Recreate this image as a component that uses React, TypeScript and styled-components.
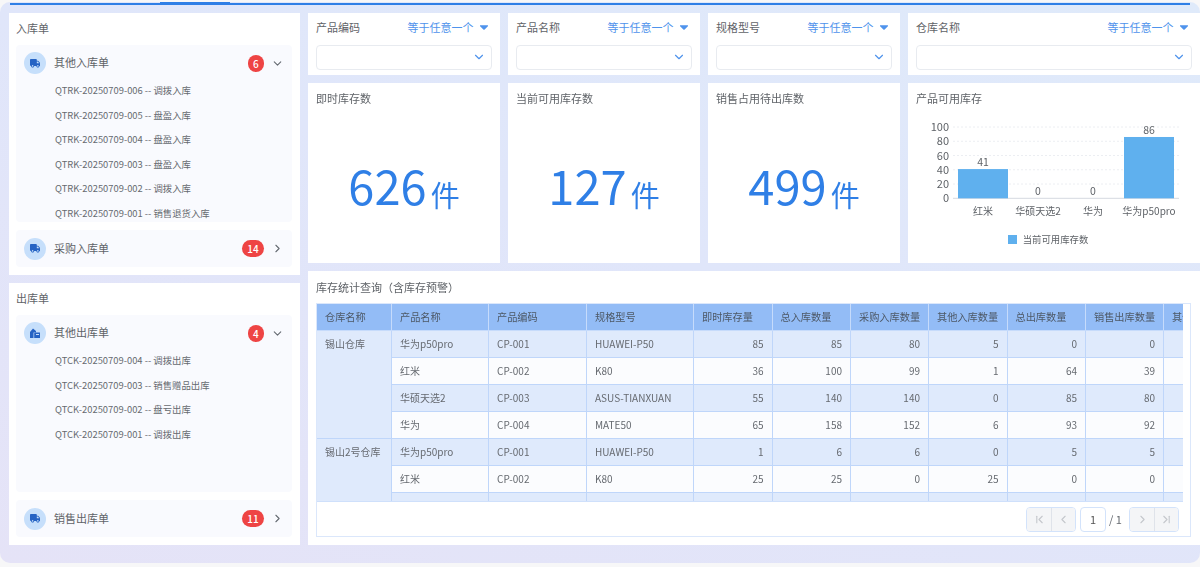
import React from "react";
import styled, { createGlobalStyle } from "styled-components";
import { FaTruck, FaCaretDown } from "react-icons/fa";
import { FiChevronDown, FiChevronRight, FiChevronLeft } from "react-icons/fi";
import { LuChevronFirst, LuChevronLast } from "react-icons/lu";

const Global = createGlobalStyle`
  html, body { margin: 0; padding: 0; background: #f7f7f8; overflow: hidden; }
  * { box-sizing: border-box; }
  body { font-family: "Noto Sans CJK SC", "Noto Sans", sans-serif; color: #5c6066; }
`;
const Page = styled.div`width:1200px;height:567px;overflow:hidden;padding-top:2px;filter:blur(0.3px);`;
const Shell = styled.div`
  height:561px;border-radius:10px;overflow:hidden;display:flex;flex-direction:column;
  background:linear-gradient(200deg,#dfeafa 0%,#e0e6fa 45%,#e5e3f7 100%);
`;
const TabLine = styled.div`height:3px;margin:0 10px;border-bottom:2px solid #2f7fe6;display:flex;padding-left:150px;flex:none;`;
const ActiveTab = styled.div`width:70px;height:3px;background:#2f7fe6;`;
const Main = styled.div`flex:1;min-height:0;display:grid;grid-template-columns:291px 892px;gap:8px;padding:8px 0 18px 9px;`;
const LeftCol = styled.div`display:grid;grid-template-rows:262px 262px;gap:8px;`;
const Panel = styled.section`background:#fff;padding:0 8px 8px 7px;display:flex;flex-direction:column;`;
const PanelTitle = styled.div`height:32px;line-height:30px;font-size:11px;color:#5f6368;flex:none;`;
const Group = styled.div<{ $open?: boolean }>`
  background:#f9fafe;border-radius:4px;overflow:hidden;
  ${p => (p.$open ? "flex:1;min-height:0;margin-bottom:8px;" : "flex:none;height:37px;")}
`;
const GroupHead = styled.div<{ $open?: boolean }>`
  display:flex;align-items:center;padding:0 5px 0 8px;
  height:${p => (p.$open ? "36px" : "37px")};
`;
const IconDot = styled.span`width:22px;height:22px;border-radius:50%;background:#c6dffb;color:#2563c4;display:flex;align-items:center;justify-content:center;flex:none;font-size:10.5px;`;
const GroupName = styled.span`margin-left:8px;font-size:11px;color:#5f6368;flex:1;padding-bottom:2px;`;
const Badge = styled.span<{ $wide?: boolean }>`
  height:17px;min-width:${p => (p.$wide ? "22px" : "16.5px")};border-radius:9px;background:#ee4444;color:#fff;
  font-size:10px;font-weight:500;line-height:17px;text-align:center;margin-right:1px;
`;
const Chevron = styled.span`width:19px;margin-left:3px;color:#666b72;display:flex;justify-content:center;font-size:13px;`;
const SubList = styled.ul`list-style:none;margin:0;padding:0 0 0 39px;`;
const SubItem = styled.li`height:24.6px;line-height:24.6px;font-size:9.4px;color:#666a70;white-space:nowrap;&:first-child{margin-top:-3px;}`;

const RightGrid = styled.div`display:grid;grid-template-columns:192px 192px 192px 292px;grid-template-rows:62px 180px 274px;gap:8px;`;
const FilterCard = styled.div`background:#fff;padding:0 8px;display:flex;flex-direction:column;`;
const FilterHead = styled.div`height:31.5px;padding:0 1.5px 3px 0;display:flex;align-items:center;justify-content:space-between;font-size:11px;`;
const FilterLabel = styled.span`color:#5f6368;`;
const FilterOp = styled.span`color:#4f93ec;display:flex;align-items:center;gap:3px;font-size:11px;`;
const SelectBox = styled.div`height:25px;border:1px solid #e8ebf0;border-radius:4px;display:flex;align-items:center;justify-content:flex-end;padding-right:5px;color:#4f93ec;font-size:14px;`;
const StatCard = styled.div`background:#fff;padding:0 8px;display:flex;flex-direction:column;`;
const ChartCard = styled(StatCard)`padding:0;`;
const CardTitle = styled.div`height:32px;line-height:31px;font-size:11px;color:#5f6368;flex:none;`;
const ChartTitle = styled(CardTitle)`padding-left:8px;`;
const StatBody = styled.div`flex:1;display:flex;align-items:center;justify-content:center;color:#2f7fe6;padding-bottom:1px;`;
const StatNum = styled.span`font-size:47px;line-height:1;margin-bottom:9px;`;
const StatUnit = styled.span`font-size:29px;line-height:1;margin-left:4px;margin-top:11px;`;
const ChartSvg = styled.svg`display:block;flex:none;font-family:"Noto Sans CJK SC","Noto Sans",sans-serif;`;
const TableCard = styled.div`grid-column:1 / -1;background:#fff;padding:0 8px;display:flex;flex-direction:column;`;
const TableTitle = styled.div`height:32px;line-height:33px;font-size:11px;color:#5f6368;flex:none;`;
const TableFrame = styled.div`width:875px;height:234px;border:1px solid #dbe7fb;display:flex;flex-direction:column;`;
const TableClip = styled.div`width:866px;height:198px;overflow:hidden;flex:none;border-bottom:1px solid #cfe0fb;`;
const Table = styled.table`border-collapse:collapse;table-layout:fixed;width:887px;margin-left:-1px;font-size:10px;color:#666a70;`;
const Col = styled.col<{ $w: number }>`width:${p => p.$w}px;`;
const Th = styled.th`height:26px;background:#93bcf6;color:#4d5866;font-weight:400;text-align:left;padding:0 8px;border:1px solid #c6dbfb;border-top:0;white-space:nowrap;overflow:hidden;font-size:10.2px;`;
const Td = styled.td<{ $num?: boolean; $odd?: boolean }>`
  height:27px;padding:0 8px;border:1px solid #bfd6fa;white-space:nowrap;
  text-align:${p => (p.$num ? "right" : "left")};
  background:${p => (p.$odd ? "#dfeafc" : "#fbfcfe")};
`;
const WarehouseTd = styled.td`vertical-align:top;padding:5px 8px 0;background:#dfeafc;border:1px solid #bfd6fa;white-space:nowrap;`;
const Pager = styled.div`flex:1;display:flex;align-items:center;justify-content:flex-end;padding-right:11px;color:#666a70;font-size:11px;`;
const PagerGroup = styled.div`display:flex;height:25px;border:1px solid #d3e3fb;border-radius:4px;overflow:hidden;`;
const PagerBtn = styled.span`width:24px;background:#f4f5f7;color:#c4c7cc;display:flex;align-items:center;justify-content:center;font-size:13px;& + &{border-left:1px solid #dfe3ea;}`;
const PagerInput = styled.span`width:26px;height:25px;margin:0 3px 0 4px;border:1px solid #d3e3fb;border-radius:4px;display:flex;align-items:center;justify-content:center;color:#555;`;
const PagerTotal = styled.span`width:13px;margin-right:7px;text-align:center;white-space:nowrap;`;
const Legend = styled.div`height:24px;display:flex;align-items:flex-start;justify-content:center;gap:6px;font-size:9.4px;line-height:16px;color:#5f6368;padding-right:12px;flex:none;`;
const LegendSwatch = styled.span`width:9px;height:9px;background:#5fb0ee;margin-top:3.5px;`;

const StockOut = () => (
  <svg width="12" height="12" viewBox="0 0 12 12" fill="currentColor">
    <path d="M1 5 4 1.5 7 4v1.5H4.5V11H1z" />
    <path d="M6 5.5h5V11H5.2V6.2zM7 7v1h3V7z" fillRule="evenodd" />
  </svg>
);

const inbound = ["006 -- 调拨入库", "005 -- 盘盈入库", "004 -- 盘盈入库", "003 -- 盘盈入库", "002 -- 调拨入库", "001 -- 销售退货入库"];
const outbound = ["004 -- 调拨出库", "003 -- 销售赠品出库", "002 -- 盘亏出库", "001 -- 调拨出库"];
const heads = ["仓库名称", "产品名称", "产品编码", "规格型号", "即时库存量", "总入库数量", "采购入库数量", "其他入库数量", "总出库数量", "销售出库数量", "其他出库数量"];
const widths = [75, 97, 98, 107, 78.5, 78.5, 78, 78.5, 78.5, 78, 78];
type Row = [string, string, string, number, number, number, number, number, number, number];
const rows1: Row[] = [
  ["华为p50pro", "CP-001", "HUAWEI-P50", 85, 85, 80, 5, 0, 0, 0],
  ["红米", "CP-002", "K80", 36, 100, 99, 1, 64, 39, 25],
  ["华硕天选2", "CP-003", "ASUS-TIANXUAN", 55, 140, 140, 0, 85, 80, 5],
  ["华为", "CP-004", "MATE50", 65, 158, 152, 6, 93, 92, 1],
];
const rows2: Row[] = [
  ["华为p50pro", "CP-001", "HUAWEI-P50", 1, 6, 6, 0, 5, 5, 0],
  ["红米", "CP-002", "K80", 25, 25, 0, 25, 0, 0, 0],
  ["华硕天选2", "CP-003", "ASUS-TIANXUAN", 3, 3, 3, 0, 0, 0, 0],
];

const renderRows = (name: string, data: Row[]) =>
  data.map((r, i) => (
    <tr key={name + i}>
      {i === 0 && <WarehouseTd rowSpan={data.length}>{name}</WarehouseTd>}
      {r.map((c, j) => (
        <Td key={j} $num={j > 2} $odd={i % 2 === 0}>{c}</Td>
      ))}
    </tr>
  ));

const Chart = () => {
  const ys = [100, 80, 60, 40, 20, 0];
  const y = (v: number) => 83.3 - v * 0.713;
  const cats = [["红米", 41, 75], ["华硕天选2", 0, 130], ["华为", 0, 185], ["华为p50pro", 86, 241]] as const;
  return (
    <ChartSvg width="292" height="116" viewBox="0 0 292 116">
      {ys.map(v => (
        <line key={v} x1={45} x2={271} y1={y(v)} y2={y(v)} stroke={v === 0 ? "#d5d9e0" : "#eceef2"} strokeDasharray={v === 0 ? undefined : "2 2"} />
      ))}
      {ys.map(v => (
        <text key={v} x={41} y={y(v) + 4} textAnchor="end" fontSize="11" fill="#5f6368">{v}</text>
      ))}
      {cats.map(([n, v, x]) => (
        <g key={n}>
          {v > 0 && <rect x={x - 25} y={y(v)} width={50} height={v * 0.713} fill="#5fb0ee" />}
          <text x={x} y={y(v) - 3} textAnchor="middle" fontSize="10.5" fill="#5f6368">{v}</text>
          <text x={x} y={100} textAnchor="middle" fontSize="10" fill="#5f6368">{n}</text>
        </g>
      ))}
    </ChartSvg>
  );
};

const Filter = ({ label }: { label: string }) => (
  <FilterCard>
    <FilterHead>
      <FilterLabel>{label}</FilterLabel>
      <FilterOp>等于任意一个<FaCaretDown size={14} /></FilterOp>
    </FilterHead>
    <SelectBox><FiChevronDown /></SelectBox>
  </FilterCard>
);
const Stat = ({ title, num }: { title: string; num: number }) => (
  <StatCard>
    <CardTitle>{title}</CardTitle>
    <StatBody><StatNum>{num}</StatNum><StatUnit>件</StatUnit></StatBody>
  </StatCard>
);

export default function App() {
  return (
    <Page>
      <Global />
      <Shell>
        <TabLine><ActiveTab /></TabLine>
        <Main>
          <LeftCol>
            <Panel>
              <PanelTitle>入库单</PanelTitle>
              <Group $open>
                <GroupHead $open><IconDot><FaTruck /></IconDot><GroupName>其他入库单</GroupName><Badge>6</Badge><Chevron><FiChevronDown /></Chevron></GroupHead>
                <SubList>{inbound.map(t => <SubItem key={t}>QTRK-20250709-{t}</SubItem>)}</SubList>
              </Group>
              <Group><GroupHead><IconDot><FaTruck /></IconDot><GroupName>采购入库单</GroupName><Badge $wide>14</Badge><Chevron><FiChevronRight /></Chevron></GroupHead></Group>
            </Panel>
            <Panel>
              <PanelTitle>出库单</PanelTitle>
              <Group $open>
                <GroupHead $open><IconDot><StockOut /></IconDot><GroupName>其他出库单</GroupName><Badge>4</Badge><Chevron><FiChevronDown /></Chevron></GroupHead>
                <SubList>{outbound.map(t => <SubItem key={t}>QTCK-20250709-{t}</SubItem>)}</SubList>
              </Group>
              <Group><GroupHead><IconDot><FaTruck /></IconDot><GroupName>销售出库单</GroupName><Badge $wide>11</Badge><Chevron><FiChevronRight /></Chevron></GroupHead></Group>
            </Panel>
          </LeftCol>
          <RightGrid>
            <Filter label="产品编码" />
            <Filter label="产品名称" />
            <Filter label="规格型号" />
            <Filter label="仓库名称" />
            <Stat title="即时库存数" num={626} />
            <Stat title="当前可用库存数" num={127} />
            <Stat title="销售占用待出库数" num={499} />
            <ChartCard>
              <ChartTitle>产品可用库存</ChartTitle>
              <Chart />
              <Legend><LegendSwatch />当前可用库存数</Legend>
            </ChartCard>
            <TableCard>
              <TableTitle>库存统计查询（含库存预警）</TableTitle>
              <TableFrame>
                <TableClip>
                  <Table>
                    <colgroup>{widths.map((w, i) => <Col key={i} $w={w} />)}</colgroup>
                    <thead><tr>{heads.map(h => <Th key={h}>{h}</Th>)}</tr></thead>
                    <tbody>
                      {renderRows("锡山仓库", rows1)}
                      {renderRows("锡山2号仓库", rows2)}
                    </tbody>
                  </Table>
                </TableClip>
                <Pager>
                  <PagerGroup><PagerBtn><LuChevronFirst /></PagerBtn><PagerBtn><FiChevronLeft /></PagerBtn></PagerGroup>
                  <PagerInput>1</PagerInput>
                  <PagerTotal>/ 1</PagerTotal>
                  <PagerGroup><PagerBtn><FiChevronRight /></PagerBtn><PagerBtn><LuChevronLast /></PagerBtn></PagerGroup>
                </Pager>
              </TableFrame>
            </TableCard>
          </RightGrid>
        </Main>
      </Shell>
    </Page>
  );
}
